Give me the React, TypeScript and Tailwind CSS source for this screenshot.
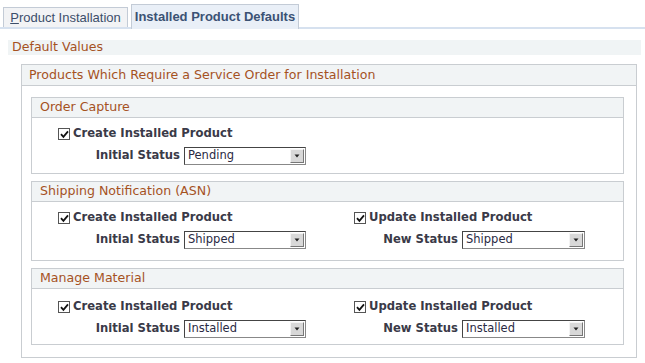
import React from "react";

const verdana = "font-['DejaVu_Sans',Verdana,sans-serif]";

function Check({ label }: { label: string }) {
  return (
    <div className="flex h-[20px] items-center pl-[26px]">
      <span className="flex h-[12px] w-[12px] items-center justify-center border border-[#555] bg-white">
        <svg width="9" height="9" viewBox="0 0 9 9">
          <path d="M1 4.2 L3.4 6.8 L8 1.4" stroke="#111" strokeWidth="1.8" fill="none" />
        </svg>
      </span>
      <span className={`ml-[3px] text-[11.6px] font-bold text-[#3a3a48] ${verdana}`}>{label}</span>
    </div>
  );
}

function Select({ value, width }: { value: string; width: string }) {
  return (
    <div
      className={`flex h-[18px] items-center border border-t-[#444] border-l-[#444] border-r-[#888] border-b-[#888] bg-white ${width}`}
    >
      <span className={`flex-1 pl-[3px] text-[11.5px] leading-none text-[#2a2a44] ${verdana}`}>{value}</span>
      <span className="mr-[1px] flex h-[14px] w-[14px] items-center justify-center border border-t-[#f4f4f4] border-l-[#f4f4f4] border-r-[#777] border-b-[#777] bg-[#d8d8d8]">
        <svg width="6" height="4" viewBox="0 0 6 4">
          <path d="M0.5 0.5 L5.5 0.5 L3 3.5 Z" fill="#222" />
        </svg>
      </span>
    </div>
  );
}

function Column({
  check,
  status,
  value,
  labelW,
  selW,
}: {
  check: string;
  status: string;
  value: string;
  labelW: string;
  selW: string;
}) {
  return (
    <div className="flex flex-col gap-[2px]">
      <Check label={check} />
      <div className="flex h-[20px] items-center">
        <span className={`pr-[4px] text-right text-[11.6px] font-bold text-[#3a3a48] ${verdana} ${labelW}`}>
          {status}
        </span>
        <Select value={value} width={selW} />
      </div>
    </div>
  );
}

function Group({
  title,
  status,
  update,
  pad,
}: {
  title: string;
  status: string;
  update?: string;
  pad: string;
}) {
  return (
    <div className="w-[593px] border border-[#c9cdd1]">
      <div
        className={`flex h-[20px] items-center border-b border-[#c9cdd1] bg-[#f1f4f5] pl-[8px] text-[12.6px] text-[#a5521f] ${verdana}`}
      >
        {title}
      </div>
      <div className={`flex ${pad}`}>
        <div className="w-[296px]">
          <Column
            check="Create Installed Product"
            status="Initial Status"
            value={status}
            labelW="w-[152px]"
            selW="w-[122px]"
          />
        </div>
        {update && (
          <div>
            <Column
              check="Update Installed Product"
              status="New Status"
              value={update}
              labelW="w-[134px]"
              selW="w-[123px]"
            />
          </div>
        )}
      </div>
    </div>
  );
}

export default function App() {
  return (
    <div className="relative h-[363px] w-[645px] overflow-hidden bg-white">
      {/* Tabs */}
      <div className="flex items-end border-b-2 border-[#d6e1ef] pl-[3px] pt-[4px]">
        <div className="mr-[3px] flex h-[20px] w-[125px] items-center justify-center border border-b-0 border-[#c3cbd6] bg-[#f2f3f5] font-['Liberation_Sans',Arial,sans-serif] text-[13px] text-[#3c4e6a]">
          <span>
            <span className="underline">P</span>roduct Installation
          </span>
        </div>
        <div className="-mb-[2px] flex h-[25px] w-[168px] items-center justify-center border border-b-0 border-[#c3cbd6] bg-[#e9eff7] font-['Liberation_Sans',Arial,sans-serif] text-[13px] font-bold text-[#3b5274]">
          Installed Product Defaults
        </div>
      </div>

      {/* Default values bar */}
      <div
        className={`ml-[8px] mt-[11px] flex h-[15px] w-[633px] items-center bg-[#f0f4f5] pl-[4px] text-[12.6px] text-[#a5521f] ${verdana}`}
      >
        Default Values
      </div>

      {/* Outer box */}
      <div className="ml-[21px] mt-[9px] w-[616px] border border-[#c9cdd1] pb-[12px]">
        <div
          className={`flex h-[21px] items-center border-b border-[#c9cdd1] bg-[#f1f4f5] pl-[7px] text-[12.6px] text-[#a5521f] ${verdana}`}
        >
          Products Which Require a Service Order for Installation
        </div>
        <div className="flex flex-col gap-[7px] pl-[9px] pt-[11px]">
          <Group title="Order Capture" status="Pending" pad="pt-[6px] pb-[7px]" />
          <Group
            title="Shipping Notification (ASN)"
            status="Shipped"
            update="Shipped"
            pad="pt-[6px] pb-[10px]"
          />
          <Group
            title="Manage Material"
            status="Installed"
            update="Installed"
            pad="pt-[8px] pb-[5px]"
          />
        </div>
      </div>
    </div>
  );
}
